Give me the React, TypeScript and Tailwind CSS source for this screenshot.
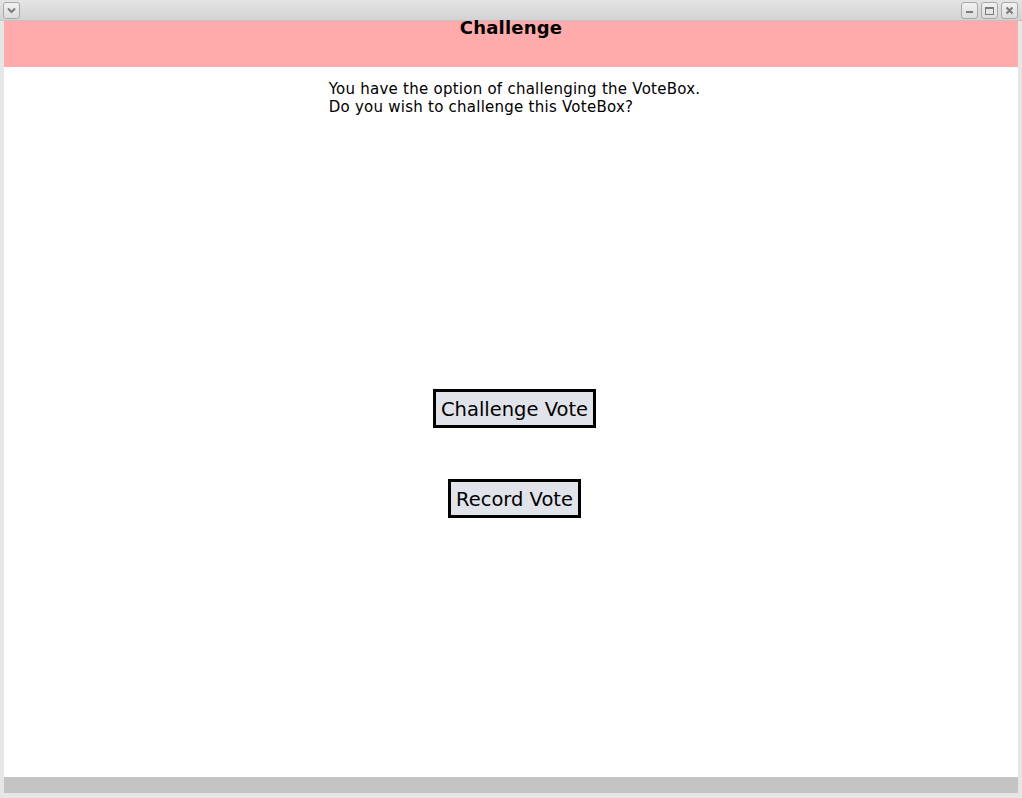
import React from "react";

const fontStack = { fontFamily: '"DejaVu Sans", "Liberation Sans", sans-serif' };

function WinButton({ children }: { children: React.ReactNode }) {
  return (
    <div className="w-[17px] h-[17px] rounded-[3px] border border-[#a9a9a9] bg-gradient-to-b from-[#f2f2f2] to-[#dcdcdc] flex items-center justify-center">
      {children}
    </div>
  );
}

function TitleBar() {
  return (
    <div className="h-[21px] bg-gradient-to-b from-[#e4e4e4] to-[#d3d3d3] border-b border-[#c2c2c2] flex items-center justify-between px-[3px]">
      <WinButton>
        <svg width="11" height="11" viewBox="0 0 11 11">
          <path d="M2 3.5 L5.5 7 L9 3.5" stroke="#7b7b7b" strokeWidth="2" fill="none" />
        </svg>
      </WinButton>
      <div className="flex gap-[3px] mr-[1px]">
        <WinButton>
          <svg width="11" height="11" viewBox="0 0 11 11">
            <rect x="2" y="6" width="7" height="2" fill="#7b7b7b" />
          </svg>
        </WinButton>
        <WinButton>
          <svg width="11" height="11" viewBox="0 0 11 11">
            <rect x="1.5" y="2.5" width="8" height="7" stroke="#7b7b7b" strokeWidth="1" fill="none" />
            <rect x="1.5" y="2" width="8" height="2" fill="#7b7b7b" />
          </svg>
        </WinButton>
        <WinButton>
          <svg width="11" height="11" viewBox="0 0 11 11">
            <path d="M2.5 2.5 L8.5 8.5 M8.5 2.5 L2.5 8.5" stroke="#7b7b7b" strokeWidth="2" />
          </svg>
        </WinButton>
      </div>
    </div>
  );
}

function VoteButton({ label }: { label: string }) {
  return (
    <button className="border-[3px] border-black bg-[#e1e3eb] px-[5px] pt-[7px] pb-[5px] text-[19.5px] leading-[21px] text-black">
      {label}
    </button>
  );
}

export default function App() {
  return (
    <div className="w-[1022px] h-[798px] bg-[#e6e6e6] flex flex-col overflow-hidden" style={fontStack}>
      <TitleBar />
      <div className="flex-1 flex px-[4px] min-h-0">
        <div className="flex-1 flex flex-col bg-white">
          {/* Header */}
          <div className="h-[46px] bg-[#ffabab] flex justify-center">
            <h1 className="mt-[-4px] text-[18px] leading-[21px] font-bold text-black tracking-[0.2px]">Challenge</h1>
          </div>

          {/* Body */}
          <div className="flex-1 flex flex-col items-center">
            <div className="mt-[13px] pl-[7px] text-[15px] leading-[18px] tracking-[0.25px] text-black">
              <p>You have the option of challenging the VoteBox.</p>
              <p>Do you wish to challenge this VoteBox?</p>
            </div>
            <div className="mt-[273px] flex flex-col items-center gap-[51px] pl-[7px]">
              <VoteButton label="Challenge Vote" />
              <VoteButton label="Record Vote" />
            </div>
          </div>

          {/* Status bar */}
          <div className="h-[16px] bg-[#c4c4c4]" />
        </div>
      </div>
      <div className="h-[5px]" />
    </div>
  );
}
